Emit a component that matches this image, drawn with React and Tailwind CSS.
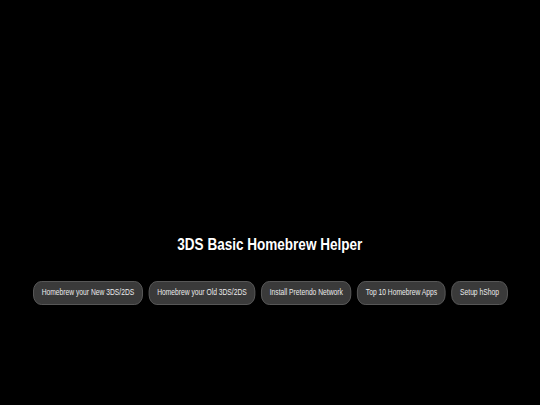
import React from 'react';

const links = [
  'Homebrew your New 3DS/2DS',
  'Homebrew your Old 3DS/2DS',
  'Install Pretendo Network',
  'Top 10 Homebrew Apps',
  'Setup hShop',
];

// the reference uses a condensed Helvetica; squeeze Liberation Sans horizontally
const App = () => {
  return (
    <div
      className="min-h-screen bg-black text-white flex flex-col items-center pt-[234px] overflow-hidden"
      style={{ fontFamily: '"Liberation Sans", Arial, sans-serif' }}
    >
      <h1 className="text-[16.5px] leading-[20px] font-bold whitespace-nowrap scale-x-[0.82]">
        3DS Basic Homebrew Helper
      </h1>

      <div className="mt-[27px] flex gap-[7px] w-max shrink-0 scale-x-[0.82]">
        {links.map((label) => (
          <button
            key={label}
            className="h-[24px] px-[9.5px] rounded-[10px] border border-[#5e5e5e] bg-[#3a3a3a] text-[8.2px] text-[#ececec] leading-none whitespace-nowrap"
          >
            {label}
          </button>
        ))}
      </div>
    </div>
  );
};

export default App;
